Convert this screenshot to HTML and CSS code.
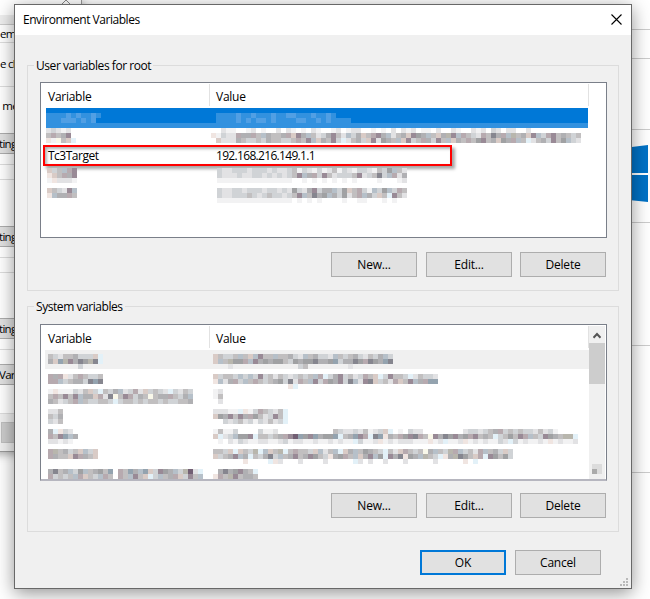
FILE: index.html
```html
<!DOCTYPE html>
<html lang="en">
<head>
<meta charset="utf-8">
<title>Environment Variables</title>
<link rel="stylesheet" href="styles.css">
</head>
<body>
<main class="desktop">
  <section class="back-right">
    <i class="rule r1"></i><i class="rule r2"></i><i class="rule r3"></i>
    <svg class="logo" viewBox="0 0 57 57" width="57" height="57"><path fill="#0072c6" d="M0 7L57 0v28H0zM0 30h57v27L0 51z"/></svg>
    <i class="rule r4"></i><i class="rule r5"></i><i class="rule r6"></i>
  </section>
  <section class="back-left">
    <svg class="caret" width="12" height="6"><path d="M1 5L6 0L11 5M4 5h4" fill="none" stroke="#888"/></svg>
    <div class="tabstrip"></div>
    <div class="pane tab">emo</div>
    <div class="pane choice">e ch</div>
    <div class="pane memory">&nbsp;me</div>
    <div class="back-btn">ting</div>
    <div class="gap g1"></div><div class="gap g2"></div><div class="gap g3"></div>
    <div class="back-btn">ting</div>
    <div class="gap g1"></div><div class="gap g2"></div><div class="gap g3"></div>
    <div class="back-btn">ting</div>
    <div class="gap g1"></div><div class="gap g4"></div>
    <div class="back-btn vari">Varia</div>
    <div class="gap g5"></div>
    <div class="footer"><span></span></div>
  </section>

  <section class="dialog">
    <header class="titlebar"><h1>Environment Variables</h1>
      <svg width="11" height="11" viewBox="0 0 11 11"><path d="M.5 .5l10 10M10.5 .5l-10 10" stroke="#000" stroke-width="1.1"/></svg>
    </header>
    <fieldset class="group user"><legend>User variables for root</legend>
      <div class="list">
        <div class="head"><span>Variable</span><span>Value</span></div>
        <div class="row selected"><b data-m="/aaaababaaba/aaabbbabab." class="blue"></b><b data-m="/.aaaabaabaaabaabbaaabaaba/.aaaabababbabaaaabbaababaaaa" class="blue"></b></div>
        <div class="row"><b data-m="bcbab/dpdeq/raxdsv"></b><b data-m="..baa..ab.a..b.ba.a.ba..ab.abb..a.a.b.bab.aa.b..ba..bab.cb.bb..b/racbbpeepdteddepsqetdbceqdbtcesdpqetbdesqfetdsewqtpdcbpdgeptwdesqtcpqdedcd/.sbbbedccdceddccdpdqtsedqcvbdecsqbfedtsqcdpecqdtsedpdfqdesfeptdvbdecqdftcb"></b></div>
        <div class="row callout-row"><span>Tc3Target</span><span class="address">192.168.216.149.1.1</span><i class="callout"></i></div>
        <div class="row indent"><b data-m="scdtpq/rsdpeq/arbbba"></b><b data-m="cbbcccbcccbcbbcdacbacabdacbaccbadcftdb/cbbbcbbccbcbcbcdqtepcqdbcccdqbcdgctpbe/aaaaaaaaaaaaaaa..a.a.a.a.a.a....a...ab"></b></div>
        <div class="row indent"><b data-m="sdcbqt/rteepd"></b><b data-m="cbbccbcccbccbcbfcbeqceetcfsdpcatcftcpd/cbbcccdcbcdccbcdqtdgeftecfbdptecsdvqdb/aaaaaaaaaaaaaaa.a.a.a....a..aa...a.a.."></b></div>
      </div>
      <div class="actions"><button>New...</button><button>Edit...</button><button>Delete</button></div>
    </fieldset>
    <fieldset class="group system"><legend>System variables</legend>
      <div class="list scroll">
        <div class="head"><span>Variable</span><span>Value</span></div>
        <div class="row muted"><b data-m="/dcbddecccsv/esuwqegfwgv/......c"></b><b data-m="/sdccdtdstqddtddecbtdeccbtdcdecbdcetc/stdwffptqefeffdcfeffgeefuceegfpgfeug/...b.............cd........b"></b></div>
        <div class="row"><b data-m="/peprbdpdccd/pptcdeecgug"></b><b data-m="/scddctctcqcdbdcbcdcdtpvceqcdbcpdsvcqddcvbdccb/rtbepctdpdcdefcgbpdtqcpfeqcgtbqgscdbpsdqtepuu/...............rv"></b></div>
        <div class="row"><b data-m="araaacbdscvdcetbcpbscdcbvcbdc/dpdqdqteespbgxdqpcedxdeepdcet/edbcdptdccddcvcddcdcddcdccdde"></b><b data-m="ab/ad/.b"></b></div>
        <div class="row"><b data-m="bbd/dce/cbd"></b><b data-m="bbbaavracpdcbdv/sfeqdqepfdbcqdv/..cbcdbcacbdbcv"></b></div>
        <div class="row"><b data-m="evrcb/pdqute/bbaba"></b><b data-m="adaac....caab...........dcbbcbdabcsv.a.cbb........bccbcdepcdcdccbdbca/svbctffqvddcdepqkufqueffuvdeuqpvguredpfqgpdxqegfqefpqdedvcdfdqptdcqfedwwv/.a.bacbaabbaabcabbaabaababaavcaabrababbbaaarabvaabrababaacbvcabaabarabaab"></b></div>
        <div class="row"><b data-m="pwdecdstcs/peddsqpeds"></b><b data-m="ddcsvsdcwvtsdwvdpddcstbdtvsetdfedcvdbspdcdxetdcwptcdbptdecsc/scdeqtevdcegctdeqdeqfdcrefpdtseqtfvqegrfetwdcvrewgfdspvqfdfc/......r....vrb...b....b.....vb.b..b...b.....b.....r.v"></b></div>
        <div class="row last"><b data-m="egdetcftdefdu.pduetuscqfetcwkbv/pcdcdtpsdctpd.pdtqdsvctdepscqdt"></b><b data-m=".egefqedv/rpdwqdeed"></b></div>
        <div class="scrollbar"><svg width="8" height="7"><path d="M.5 5.8L4 2L7.5 5.8" fill="none" stroke="#555" stroke-width="2"/></svg><i class="thumb"></i><i class="down"></i></div>
      </div>
      <div class="actions"><button>New...</button><button>Edit...</button><button>Delete</button></div>
    </fieldset>
    <div class="confirm"><button class="ok">OK</button><button>Cancel</button></div>
    <svg class="grip" width="8" height="8"><path fill="#b9b9b9" d="M6 0h2v2H6zM3 3h2v2H3zM6 3h2v2H6zM0 6h2v2H0zM3 6h2v2H3zM6 6h2v2H6z"/></svg>
  </section>
</main>
<script src="mosaic.js"></script>
</body>
</html>
```
FILE: styles.css
```css
* { box-sizing: border-box; }
body { margin: 0; font: 12px "Open Sans", "Noto Sans", sans-serif; color: #000; }
.desktop { position: relative; width: 650px; height: 599px; overflow: hidden; background: #fff; }

.back-right { position: absolute; left: 591px; top: 0; width: 59px; display: flex; flex-direction: column; }
.rule { height: 1px; background: #ccc; }
.r1 { margin-top: 29px; }
.r2 { margin-top: 28px; }
.r3 { margin-top: 70px; }
.logo { margin-top: 15px; }
.r4 { margin-top: 20px; }
.r5 { margin-top: 122px; }
.r6 { margin-top: 126px; }

.back-left { position: absolute; left: -10px; top: -1px; width: 92px; height: 453px; background: #fff; border: 1px solid #999; box-shadow: 0 2px 9px rgba(0,0,0,.35); padding-left: 9px; letter-spacing: -.7px; font-size: 11.5px; }
.caret { position: absolute; left: 69px; top: 0; }
.tabstrip { height: 25px; background: linear-gradient(#fff 15px, #eee 15px); border-bottom: 1px solid #ccc; }
.pane { border-bottom: 1px solid #ddd; white-space: nowrap; }
.tab { height: 18px; line-height: 17px; }
.choice { height: 44px; line-height: 42px; }
.memory { height: 46px; line-height: 38px; border: 0; }
.back-btn { height: 21px; line-height: 19px; background: #e1e1e1; border: solid #adadad; border-width: 1px 0; margin-left: -1px; white-space: nowrap; }
.gap { border-bottom: 1px solid #dcdcdc; }
.g1 { height: 11px; }
.g2 { height: 15px; }
.g3 { height: 45.5px; border: 0; }
.g4 { height: 14px; border: 0; }
.g5 { height: 29px; }
.footer { height: 37px; background: #f0f0f0; padding: 8px 0 0 1px; }
.footer span { display: block; height: 21px; background: #ccc; border: 1px solid #bfbfbf; }

.dialog { position: absolute; left: 14px; top: 4px; width: 618px; height: 585px; background: #f0f0f0; border: 1px solid #686868; box-shadow: 0 4px 17px rgba(0,0,0,.43); }
.titlebar { height: 30px; background: #fff; display: flex; align-items: center; justify-content: space-between; padding: 0 9px 2px 8px; }
h1 { margin: 0; font-size: 12px; font-weight: 400; letter-spacing: -.46px; }
.group { margin: 0 0 0 12px; padding: 0 0 0 12px; width: 592px; min-width: 0; border: 1px solid #dcdcdc; }
.user { margin-top: 22px; height: 234px; }
.system { margin-top: 7px; height: 234px; }
legend { margin-left: -6px; padding: 0 2px; height: 17px; line-height: 17px; letter-spacing: -.44px; }
.list { position: relative; width: 567px; height: 156px; margin-top: 8px; background: #fff; border: 1px solid #7a7f89; padding-left: 5px; letter-spacing: -.27px; }
.head { height: 25px; display: grid; grid-template-columns: 164px 379px; line-height: 26px; padding-top: 1px; }
.head span { height: 22px; border-right: 1px solid #e2e2e2; padding-left: 2px; }
.head span + span { padding-left: 6px; }
.row { position: relative; height: 20px; display: grid; grid-template-columns: 165px 377px; width: 542px; }
.row b { display: grid; grid-auto-rows: 5px; align-content: start; justify-content: start; }
.indent { padding-left: 1px; }
.selected { background: linear-gradient(#0078d7 15px, #3291df 15px); }
.callout-row { line-height: 16px; }
.callout-row span { padding-left: 2px; letter-spacing: -.5px; }
.callout-row .address { padding-left: 5px; letter-spacing: -.68px; }
.callout { position: absolute; left: -3px; top: -3px; width: 409px; height: 21px; border: 2px solid #f00; box-shadow: 3px 3px 3px rgba(0,0,0,.35), inset 2px 2px 3px rgba(0,0,0,.3); }
.indent b + b { padding-left: 5px; }
.scroll { margin-top: 9px; padding-left: 7px; border-bottom: 2px solid #b6b6bf; height: 157px; }
.scroll .head { margin-left: -2px; height: 24px; }
.muted { background: linear-gradient(#fff 1px, #f0f0f0 1px); }
.scroll .row { margin-left: -3px; padding-left: 3px; width: 544px; grid-template-columns: 165px 376px; }
.scroll .last { height: 10px; }
.scrollbar { position: absolute; right: 1px; top: 1px; width: 16px; height: 153px; background: #f0f0f0; display: flex; flex-direction: column; align-items: center; padding-top: 6px; }
.thumb { width: 16px; height: 41px; margin-top: 4px; background: #cdcdcd; }
.down { width: 10px; height: 10px; margin-top: 80px; background: linear-gradient(#aaa, #aaa) 0 5px / 5px 5px no-repeat #dcdcdc; }

.m-a { background: #f2f2f3; } .m-b { background: #e2e2e4; } .m-c { background: #d0d3d6; }
.m-d { background: #c1bfc0; } .m-e { background: #b0b0b3; } .m-f { background: #a0a1a3; }
.m-g { background: #86868f; } .m-k { background: #725f74; } .m-p { background: #b7aaaf; }
.m-q { background: #998a96; } .m-r { background: #f0e5e1; } .m-s { background: #d9cbc6; }
.m-t { background: #b6c0c9; } .m-u { background: #94a3af; } .m-v { background: #e3f1f8; }
.m-w { background: #b8b6ad; } .m-x { background: #f9f8ea; }
.blue .m-a { background: #3291df; } .blue .m-b { background: #519fe4; }

.actions { display: flex; gap: 9px; margin: 14px 0 0 291px; }
.system .actions { margin-top: 12px; }
.actions button:last-child { margin-left: -1px; }
button { width: 86px; height: 25px; padding: 0 0 1px; font: inherit; letter-spacing: -.2px; color: #000; background: #e1e1e1; border: 1px solid #adadad; }
.confirm { display: flex; gap: 9px; margin: 18px 0 0 405px; }
.ok { border: 2px solid #0078d7; }
.grip { position: absolute; right: 3px; bottom: 2px; }
```
FILE: mosaic.js
```js
// Each letter is one 5px cell; slashes separate the lines of a cell pattern.
document.querySelectorAll('[data-m]').forEach(el => {
  const lines = el.dataset.m.split('/');
  const cols = Math.max(...lines.map(l => l.length));
  el.style.gridTemplateColumns = `repeat(${cols}, 5px)`;
  lines.forEach(line => {
    for (let i = 0; i < cols; i++) {
      const cell = document.createElement('i');
      if (line[i] && line[i] !== '.') cell.className = 'm-' + line[i];
      el.append(cell);
    }
  });
});
```
